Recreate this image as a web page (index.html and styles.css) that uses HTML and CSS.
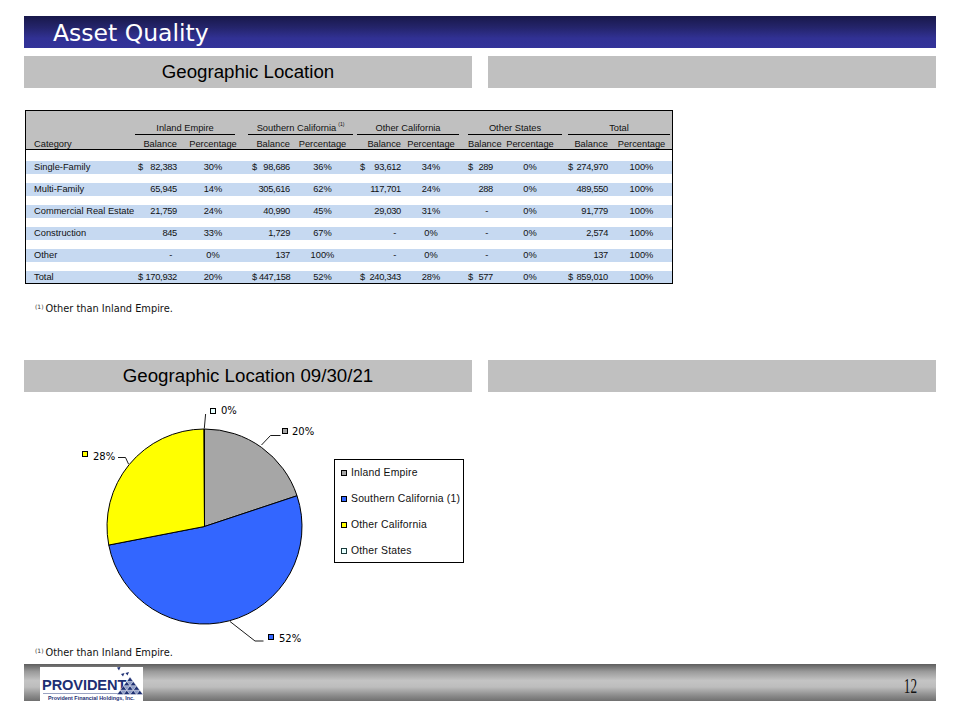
FILE: index.html
```html
<!DOCTYPE html>
<html>
<head>
<meta charset="utf-8">
<title>Asset Quality</title>
<link rel="stylesheet" href="styles.css">
</head>
<body>
<div class="slide">
  <div class="titlebar">Asset Quality</div>
  <div class="secrow">
    <div class="sec">Geographic Location</div>
    <div class="sec"></div>
  </div>

  <div class="tbl">
    <div class="grid ghead">
      <div></div>
      <div class="grp g1">Inland Empire</div>
      <div class="grp g2">Southern California<span class="sup">(1)</span></div>
      <div class="grp g3">Other California</div>
      <div class="grp g4">Other States</div>
      <div class="grp g5">Total</div>
    </div>
    <div class="grid shead">
      <div class="cat">Category</div>
      <div class="b">Balance</div><div class="p">Percentage</div>
      <div class="b">Balance</div><div class="p">Percentage</div>
      <div class="b">Balance</div><div class="p">Percentage</div>
      <div class="b os">Balance</div><div class="p">Percentage</div>
      <div class="b">Balance</div><div class="p">Percentage</div>
    </div>

    <div class="grid row first">
      <div class="cat">Single-Family</div>
      <div class="b d"><span>$</span><span>82,383</span></div><div class="p">30%</div>
      <div class="b d"><span>$</span><span>98,686</span></div><div class="p">36%</div>
      <div class="b d"><span>$</span><span>93,612</span></div><div class="p">34%</div>
      <div class="b d"><span>$</span><span>289</span></div><div class="p">0%</div>
      <div class="b d"><span>$</span><span>274,970</span></div><div class="p">100%</div>
    </div>
    <div class="grid row">
      <div class="cat">Multi-Family</div>
      <div class="b">65,945</div><div class="p">14%</div>
      <div class="b">305,616</div><div class="p">62%</div>
      <div class="b">117,701</div><div class="p">24%</div>
      <div class="b">288</div><div class="p">0%</div>
      <div class="b">489,550</div><div class="p">100%</div>
    </div>
    <div class="grid row">
      <div class="cat">Commercial Real Estate</div>
      <div class="b">21,759</div><div class="p">24%</div>
      <div class="b">40,990</div><div class="p">45%</div>
      <div class="b">29,030</div><div class="p">31%</div>
      <div class="b"><span class="dash">-</span></div><div class="p">0%</div>
      <div class="b">91,779</div><div class="p">100%</div>
    </div>
    <div class="grid row">
      <div class="cat">Construction</div>
      <div class="b">845</div><div class="p">33%</div>
      <div class="b">1,729</div><div class="p">67%</div>
      <div class="b"><span class="dash">-</span></div><div class="p">0%</div>
      <div class="b"><span class="dash">-</span></div><div class="p">0%</div>
      <div class="b">2,574</div><div class="p">100%</div>
    </div>
    <div class="grid row">
      <div class="cat">Other</div>
      <div class="b"><span class="dash">-</span></div><div class="p">0%</div>
      <div class="b">137</div><div class="p">100%</div>
      <div class="b"><span class="dash">-</span></div><div class="p">0%</div>
      <div class="b"><span class="dash">-</span></div><div class="p">0%</div>
      <div class="b">137</div><div class="p">100%</div>
    </div>
    <div class="grid row total">
      <div class="cat">Total</div>
      <div class="b d"><span>$</span><span>170,932</span></div><div class="p">20%</div>
      <div class="b d"><span>$</span><span>447,158</span></div><div class="p">52%</div>
      <div class="b d"><span>$</span><span>240,343</span></div><div class="p">28%</div>
      <div class="b d"><span>$</span><span>577</span></div><div class="p">0%</div>
      <div class="b d"><span>$</span><span>859,010</span></div><div class="p">100%</div>
    </div>
  </div>

  <div class="note note1"><span class="fn">(1)</span>Other than Inland Empire.</div>

  <div class="secrow sec2">
    <div class="sec">Geographic Location 09/30/21</div>
    <div class="sec"></div>
  </div>

  <div class="chart">
    <svg class="pie" width="464" height="253" viewBox="0 0 464 253">
      <g transform="translate(-24 -392)" stroke="#000" stroke-width="1">
        <path d="M204.5,526.5 L204.5,429 A97.5,97.5 0 0 1 297.03,495.78 Z" fill="#a6a6a6"/>
        <path d="M204.5,526.5 L297.03,495.78 A97.5,97.5 0 1 1 108.78,545.05 Z" fill="#3366ff"/>
        <path d="M204.5,526.5 L108.78,545.05 A97.5,97.5 0 0 1 204.09,429 Z" fill="#ffff00"/>
        <path d="M204.5,526.5 L204.09,429 L204.5,429 Z" fill="#e6ffff"/>
        <g fill="none" stroke-width="0.9">
          <polyline points="204.3,428.5 205.6,414"/>
          <polyline points="261.5,445 270.5,435.5 280.5,435.5"/>
          <polyline points="118,457.5 125.5,457.5 128.5,464"/>
          <polyline points="230,621.5 255,641 263.5,641"/>
        </g>
        <rect x="210.5" y="408.5" width="5" height="5" fill="#e6ffff"/>
        <rect x="282.5" y="428.5" width="5" height="5" fill="#a6a6a6"/>
        <rect x="82.5" y="451.5" width="5" height="5" fill="#ffff00"/>
        <rect x="268.5" y="634.5" width="5" height="5" fill="#3366ff"/>
      </g>
      <g transform="translate(-24 -392)" class="lbl">
        <text x="221" y="414">0%</text>
        <text x="292" y="435">20%</text>
        <text x="93" y="460">28%</text>
        <text x="279" y="642">52%</text>
      </g>
    </svg>
    <div class="legend">
      <div class="li"><span class="sw ie"></span>Inland Empire</div>
      <div class="li"><span class="sw sc"></span>Southern California (1)</div>
      <div class="li"><span class="sw oc"></span>Other California</div>
      <div class="li"><span class="sw os2"></span>Other States</div>
    </div>
  </div>

  <div class="note note2"><span class="fn">(1)</span>Other than Inland Empire.</div>

  <div class="footer">
    <div class="logo">
      <div class="brand">PROVIDENT</div>
      <div class="rule"></div>
      <div class="subname">Provident Financial Holdings, Inc.</div>
      <svg class="tri" width="28" height="28" viewBox="0 0 28 28">
        <polygon points="1,0.5 4.5,0 3,3.5" fill="#1d2f73"/>
        <polygon points="5,7 8.5,6 7,9.5" fill="#1d2f73"/>
        <polygon points="9.5,6 13,5 11.5,8.5" fill="#1d2f73"/>
        <g transform="translate(1 10) scale(1 1.1)">
          <g fill="#8d9cc6">
            <polygon points="9.75,4 16.25,4 13,8"/>
            <polygon points="6.5,8 13,8 9.75,12"/>
            <polygon points="13,8 19.5,8 16.25,12"/>
            <polygon points="3.25,12 9.75,12 6.5,16"/>
            <polygon points="9.75,12 16.25,12 13,16"/>
            <polygon points="16.25,12 22.75,12 19.5,16"/>
          </g>
          <g fill="#1d2f73" stroke="#fff" stroke-width="0.4">
            <polygon points="9.75,4 13,0 16.25,4"/>
            <polygon points="6.5,8 9.75,4 13,8"/>
            <polygon points="13,8 16.25,4 19.5,8"/>
            <polygon points="3.25,12 6.5,8 9.75,12"/>
            <polygon points="9.75,12 13,8 16.25,12"/>
            <polygon points="16.25,12 19.5,8 22.75,12"/>
            <polygon points="0,16 3.25,12 6.5,16"/>
            <polygon points="6.5,16 9.75,12 13,16"/>
            <polygon points="13,16 16.25,12 19.5,16"/>
            <polygon points="19.5,16 22.75,12 26,16"/>
          </g>
        </g>
      </svg>
    </div>
    <div class="pnum">12</div>
  </div>
</div>
</body>
</html>
```

FILE: styles.css
```css
* { box-sizing: border-box; }
html, body { margin: 0; padding: 0; background: #fff; }
body {
  width: 960px;
  height: 720px;
  overflow: hidden;
  font-family: "Liberation Sans", Arial, sans-serif;
  color: #000;
}
.slide { padding: 16px 24px 0 24px; }

.titlebar {
  height: 32px;
  background: linear-gradient(to bottom, #18184a 0%, #24246a 35%, #313194 70%, #333399 100%);
  color: #fff;
  font-family: "DejaVu Sans", Verdana, sans-serif;
  font-size: 23.5px;
  line-height: 35px;
  padding-left: 29px;
  overflow: hidden;
  white-space: nowrap;
}

.secrow {
  display: grid;
  grid-template-columns: 448px 448px;
  column-gap: 16px;
  margin-top: 8px;
}
.sec {
  height: 32px;
  background: #c0c0c0;
  text-align: center;
  font-size: 18.7px;
  line-height: 32px;
  white-space: nowrap;
}
.sec2 { margin-top: 47px; }

/* table */
.tbl {
  margin-top: 22px;
  margin-left: 1px;
  width: 648px;
  border: 1px solid #000;
  font-size: 9.3px;
  color: #111;
}
.grid {
  display: grid;
  grid-template-columns: 110px 44px 66px 47px 59px 52px 54px 38px 68px 47px 61px;
}
.ghead { background: #c0c0c0; height: 24px; }
.grp {
  grid-column: span 2;
  padding-top: 12px;
  height: 24px;
  line-height: 11px;
  border-bottom: 1px solid #000;
  text-align: center;
  white-space: nowrap;
}
.g1 { margin: 0 11px 0 -1px; }
.g2 { margin: 0 -1px 0 2px; }
.g3 { margin: 0 -1px 0 5px; }
.g4 { margin: 0 2px 0 10px; }
.g5 { margin: 0 2px 0 4px; }
.sup { font-size: 5px; line-height: 0; vertical-align: 5px; margin-left: 2px; }

.shead {
  background: #c0c0c0;
  height: 15px;
  border-bottom: 1px solid #000;
  padding-top: 4px;
  line-height: 10px;
}
.row {
  background: #c6d9f1;
  height: 13px;
  line-height: 13px;
  margin-top: 9px;
}
.row.first { margin-top: 11px; }
.row.total { height: 12px; line-height: 12px; }

.cat { padding-left: 8px; white-space: nowrap; }
.b {
  display: flex;
  justify-content: flex-end;
  padding-right: 3px;
  white-space: nowrap;
}
.row .b { letter-spacing: -0.3px; }
.b.d { justify-content: space-between; }
.b.d span:first-child { margin-right: 2px; }
.grid > .d:nth-child(2) { padding-left: 2px; }
.grid > .d:nth-child(4) { padding-left: 6px; }
.grid > .d:nth-child(6) { padding-left: 8px; }
.grid > .d:nth-child(8) { padding-left: 10px; }
.grid > .d:nth-child(10) { padding-left: 4px; }
.shead .b.os { justify-content: flex-start; padding-left: 10px; }
.p { text-align: center; white-space: nowrap; }
.dash { margin-right: 5px; }

/* footnotes */
.note {
  padding: 2px 0 0 11px;
  font-family: "DejaVu Sans", Verdana, sans-serif;
  font-size: 9.8px;
  line-height: 12px;
  height: 12px;
  color: #111;
  white-space: nowrap;
}
.note1 { margin-top: 17px; }
.fn { font-size: 6px; line-height: 0; vertical-align: 3px; margin-right: 2px; color: #333; }

/* chart */
.chart { position: relative; height: 253px; }
.pie { position: absolute; left: 0; top: 0; }
.lbl text {
  font-family: "DejaVu Sans", Verdana, sans-serif;
  font-size: 10px;
  fill: #000;
}
.legend {
  position: absolute;
  left: 310px;
  top: 67px;
  width: 130px;
  height: 104px;
  border: 1px solid #000;
  padding: 6px 0 0 6px;
  display: flex;
  flex-direction: column;
  gap: 12px;
  font-size: 10.4px;
  letter-spacing: 0.2px;
  color: #111;
}
.li { display: flex; align-items: center; height: 14px; line-height: 14px; white-space: nowrap; }
.sw { width: 6px; height: 6px; border: 1px solid #000; margin-right: 4px; flex: none; }
.sw.ie { background: #a6a6a6; }
.sw.sc { background: #3366ff; }
.sw.oc { background: #ffff00; }
.sw.os2 { background: #e6ffff; border-color: #1a3a3a; }

/* footer */
.footer {
  margin-top: 7px;
  height: 37px;
  background: linear-gradient(to bottom, #5e5e5e 0%, #999 20%, #c4c4c4 45%, #bdbdbd 62%, #8c8c8c 85%, #707070 100%);
  display: flex;
  justify-content: space-between;
  align-items: flex-start;
  padding: 3px 19px 0 16px;
}
.logo {
  position: relative;
  width: 103px;
  height: 34px;
  background: #fff;
}
.brand {
  font-weight: bold;
  font-size: 14.6px;
  line-height: 14px;
  padding: 11px 0 0 2px;
  color: #1d2f73;
  letter-spacing: -0.1px;
  white-space: nowrap;
}
.rule { height: 1px; background: #9aa3c2; margin: 1px 3px 0 3px; }
.subname {
  font-size: 5.4px;
  line-height: 6px;
  font-weight: bold;
  color: #1d2f73;
  padding-left: 8px;
  margin-top: 1px;
  white-space: nowrap;
}
.tri { position: absolute; left: 76px; top: 0; }
.pnum {
  font-family: "Liberation Serif", "Times New Roman", serif;
  font-size: 22px;
  line-height: 22px;
  margin-top: 8px;
  transform: scaleX(0.6);
  transform-origin: right center;
  color: #111;
}
```
